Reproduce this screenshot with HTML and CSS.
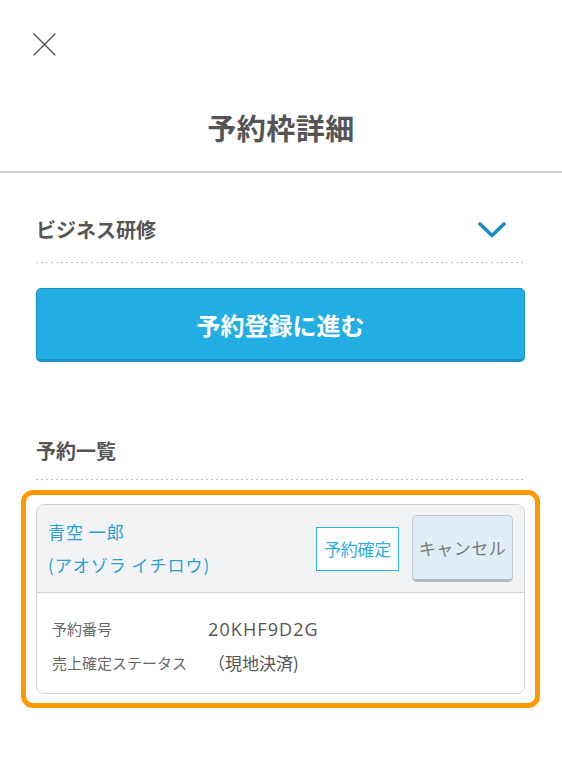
FILE: index.html
```html
<!DOCTYPE html>
<html lang="ja">
<head>
<meta charset="utf-8">
<title>予約枠詳細</title>
<link rel="stylesheet" href="styles.css">
</head>
<body>
<header class="page-header">
  <div class="close">
    <svg width="23" height="23" viewBox="0 0 23 23" aria-hidden="true">
      <path d="M1 1 L22 22 M22 1 L1 22" stroke="#555" stroke-width="1.4" fill="none" stroke-linecap="round"/>
    </svg>
  </div>
  <h1 class="title">予約枠詳細</h1>
</header>

<main class="content">
  <div class="accordion">
    <span class="accordion-label">ビジネス研修</span>
    <svg class="chevron" width="28" height="16" viewBox="0 0 28 16" aria-hidden="true">
      <polyline points="2,2 14,13.5 26,2" stroke="#1a8dc6" stroke-width="3.6" fill="none" stroke-linecap="round" stroke-linejoin="round"/>
    </svg>
  </div>
  <div class="dots"></div>

  <button class="primary">予約登録に進む</button>

  <h2 class="section-title">予約一覧</h2>
  <div class="dots"></div>

  <div class="highlight">
    <div class="card">
      <div class="card-head">
        <div class="names">
          <div>青空 一郎</div>
          <div>(アオゾラ イチロウ)</div>
        </div>
        <div class="status">予約確定</div>
        <div class="cancel">キャンセル</div>
      </div>
      <div class="card-body">
        <div class="label">予約番号</div>
        <div class="value code">20KHF9D2G</div>
        <div class="label">売上確定ステータス</div>
        <div class="value">（現地決済)</div>
      </div>
    </div>
  </div>
</main>
</body>
</html>
```

FILE: styles.css
```css
html, body {
  margin: 0;
  padding: 0;
  background: #ffffff;
}

body {
  font-family: "Noto Sans CJK JP", "Noto Sans", sans-serif;
  color: #555;
}

.page-header {
  padding: 33px 0 29px;
  border-bottom: 2px solid #c9cfcf;
}

.close {
  margin-left: 33px;
  width: 23px;
  height: 23px;
}

.close svg {
  display: block;
}

.title {
  margin: 56px 0 0;
  font-size: 29px;
  line-height: 30px;
  font-weight: 700;
  text-align: center;
  color: #555;
  letter-spacing: 0.5px;
}

.content {
  padding: 0 37px 0 36px;
}

.accordion {
  margin-top: 47px;
  padding-bottom: 22px;
  display: flex;
  align-items: center;
  justify-content: space-between;
}

.accordion-label {
  font-size: 20px;
  line-height: 20px;
  font-weight: 700;
  color: #555;
}

.chevron {
  display: block;
  margin-right: 19px;
}

.dots {
  height: 1px;
  background: repeating-linear-gradient(to right, #bdbdbd 0 2px, transparent 2px 5px);
}

.primary {
  display: block;
  width: 100%;
  height: 74px;
  margin-top: 25px;
  box-sizing: border-box;
  background: #22ade3;
  border: 1px solid #1b93c6;
  border-bottom-width: 3px;
  border-radius: 5px;
  color: #ffffff;
  font-family: "Noto Sans CJK JP", "Noto Sans", sans-serif;
  font-size: 24px;
  font-weight: 700;
  padding: 0;
}

.section-title {
  margin: 79px 0 0;
  padding-bottom: 18px;
  font-size: 20px;
  line-height: 20px;
  font-weight: 700;
  color: #555;
}

.highlight {
  margin: 10px -15px 0;
  border: 5px solid #fd9800;
  border-radius: 12px;
  padding: 9px 10px;
}

.card {
  border: 1px solid #cfd2d4;
  border-radius: 8px;
  overflow: hidden;
}

.card-head {
  display: flex;
  align-items: center;
  gap: 13px;
  background: #f2f3f5;
  height: 87px;
  padding: 0 11px;
  border-bottom: 1px solid #d2d4d6;
}

.names {
  flex: 1;
  color: #2a9fd6;
  font-size: 17px;
  line-height: 33px;
  margin-top: -2px;
  letter-spacing: 1px;
  white-space: nowrap;
}

.status {
  width: 83px;
  height: 44px;
  box-sizing: border-box;
  border: 1px solid #2bb0e6;
  background: #ffffff;
  color: #2bace3;
  font-size: 17px;
  display: flex;
  align-items: center;
  justify-content: center;
  letter-spacing: -0.3px;
}

.cancel {
  width: 101px;
  height: 67px;
  box-sizing: border-box;
  background: #e0edf7;
  border: 1px solid #c2c9ce;
  border-bottom: 3px solid #b3bbc1;
  border-radius: 5px;
  color: #777;
  font-size: 17px;
  display: flex;
  align-items: center;
  justify-content: center;
  letter-spacing: 0.5px;
}

.card-body {
  display: grid;
  grid-template-columns: 156px 1fr;
  padding: 19px 15px 13px;
  background: #ffffff;
}

.label {
  font-size: 15px;
  line-height: 34px;
  color: #666;
}

.value {
  font-size: 17px;
  line-height: 34px;
  color: #555;
}

.code {
  font-family: "Open Sans", "Noto Sans", sans-serif;
  font-size: 18px;
  font-weight: 400;
  letter-spacing: 1.1px;
}
```
